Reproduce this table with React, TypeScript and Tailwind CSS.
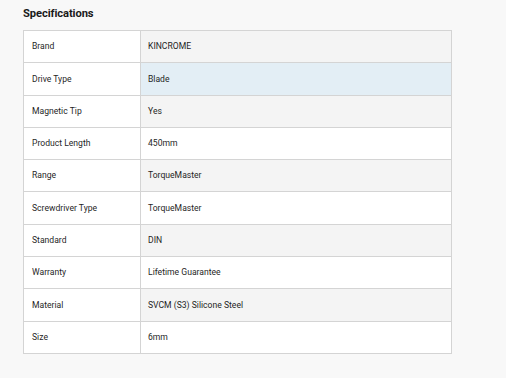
import React from 'react';

const specs: [string, string][] = [
    ['Brand', 'KINCROME'],
    ['Drive Type', 'Blade'],
    ['Magnetic Tip', 'Yes'],
    ['Product Length', '450mm'],
    ['Range', 'TorqueMaster'],
    ['Screwdriver Type', 'TorqueMaster'],
    ['Standard', 'DIN'],
    ['Warranty', 'Lifetime Guarantee'],
    ['Material', 'SVCM (S3) Silicone Steel'],
    ['Size', '6mm'],
];

export default function App() {
    return (
        <div className="min-h-[378px] w-full bg-[#f8f8f8] pl-[23px] pt-[6px] font-['Roboto',sans-serif] text-[#1f1f1f]">
            <h2 className="text-[11.2px] font-bold leading-[16px] tracking-[-0.1px] text-[#1a1a1a]">Specifications</h2>
            <table className="mt-[8px] w-[429px] border-collapse border border-[#d4d4d4] text-[8.6px]">
                <tbody>
                    {specs.map(([label, value], i) => {
                        const valueBg = i === 1 ? 'bg-[#e3eef5]' : i % 2 === 0 ? 'bg-[#f4f4f4]' : 'bg-white';
                        return (
                            <tr key={label} className="h-[32.3px]">
                                <td className="w-[117px] border border-[#d4d4d4] bg-white px-[8px] align-middle">{label}</td>
                                <td className={`border border-[#d4d4d4] px-[7px] align-middle ${valueBg}`}>{value}</td>
                            </tr>
                        );
                    })}
                </tbody>
            </table>
        </div>
    );
}
